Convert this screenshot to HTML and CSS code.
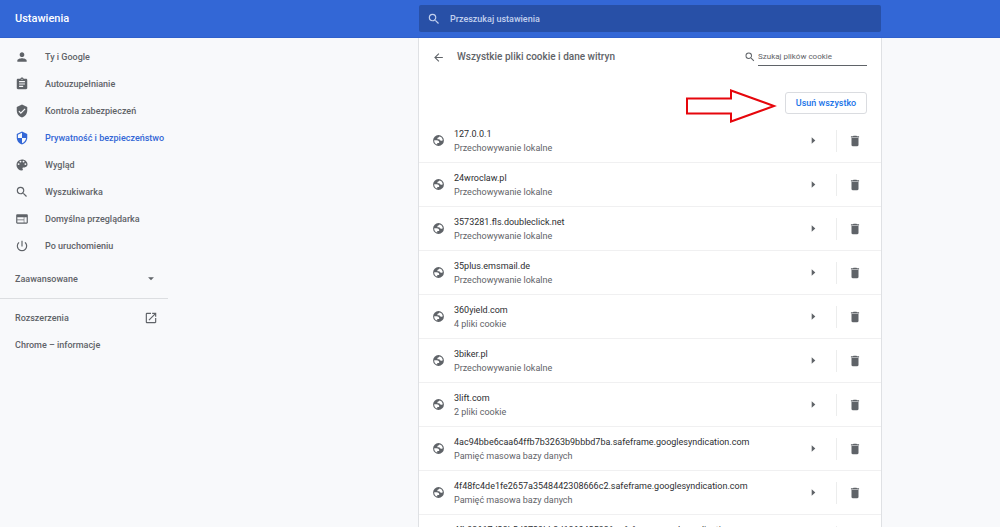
FILE: index.html
```html
<!DOCTYPE html>
<html lang="pl">
<head>
<meta charset="utf-8">
<meta name="viewport" content="width=device-width, initial-scale=1">
<title>Ustawienia</title>
<link rel="stylesheet" href="styles.css">
</head>
<body>
<svg class="sprite" aria-hidden="true">
  <symbol id="globe" viewBox="0 0 24 24"><path fill-rule="evenodd" d="M12 2a10 10 0 1 0 0 20 10 10 0 0 0 0-20zM4.100 11.500h4.500c3.300 0 5 1.700 4.700 5h-3.600v3.100a8 8 0 0 1-5.600-8.100zM14.600 4.400a8 8 0 0 1 5.300 6.600c-.6 1-1.500 1.600-2.800 1.600-2.100 0-3.200-.9-3.200-2.700H10c-.3-2.500.7-3.800 2.800-3.800 0-.8.600-1.500 1.800-1.700z"/></symbol>
  <symbol id="trash" viewBox="0 0 24 24"><path d="M6 19c0 1.100.9 2 2 2h8c1.100 0 2-.9 2-2V7H6v12zM19 4h-3.500l-1-1h-5l-1 1H5v2h14V4z"/></symbol>
  <symbol id="search" viewBox="0 0 24 24"><path d="M15.500 14h-.79l-.28-.27A6.471 6.471 0 0 0 16 9.500 6.500 6.500 0 1 0 9.500 16c1.610 0 3.090-.59 4.230-1.570l.27.28v.79l5 4.990L20.490 19l-4.990-5zm-6 0C7.010 14 5 11.990 5 9.500S7.010 5 9.500 5 14 7.010 14 9.500 11.990 14 9.500 14z"/></symbol>
  <symbol id="right" viewBox="0 0 24 24"><path d="M8 5v14l8-7z"/></symbol>
</svg>
<header class="topbar">
  <h1 class="topbar-title">Ustawienia</h1>
  <label class="topbar-search">
    <svg class="icon-search"><use href="#search"/></svg>
    <input class="topbar-input" type="search" placeholder="Przeszukaj ustawienia" aria-label="Przeszukaj ustawienia">
  </label>
</header>
<div class="layout">
  <nav class="menu">
    <a class="menu-item" href="#people"><svg class="menu-icon" viewBox="0 0 24 24"><path d="M12 12c2.210 0 4-1.790 4-4s-1.790-4-4-4-4 1.790-4 4 1.790 4 4 4zm0 2c-2.670 0-8 1.340-8 4v2h16v-2c0-2.660-5.330-4-8-4z"/></svg>Ty i Google</a>
    <a class="menu-item" href="#autofill"><svg class="menu-icon" viewBox="0 0 24 24"><path d="M19 3h-4.180C14.400 1.840 13.300 1 12 1s-2.400.84-2.820 2H5c-1.100 0-2 .9-2 2v14c0 1.100.9 2 2 2h14c1.100 0 2-.9 2-2V5c0-1.100-.9-2-2-2zm-7 0c.55 0 1 .45 1 1s-.45 1-1 1-1-.45-1-1 .45-1 1-1zm2 14H7v-2h7v2zm3-4H7v-2h10v2zm0-4H7V7h10v2z"/></svg>Autouzupełnianie</a>
    <a class="menu-item" href="#safety"><svg class="menu-icon" viewBox="0 0 24 24"><path d="M12 1 3 5v6c0 5.550 3.840 10.740 9 12 5.160-1.260 9-6.450 9-12V5l-9-4zm-2 16-4-4 1.410-1.410L10 14.170l6.590-6.590L18 9l-8 8z"/></svg>Kontrola zabezpieczeń</a>
    <a class="menu-item menu-item-active" href="#privacy" aria-current="page"><svg class="menu-icon" viewBox="0 0 24 24"><path d="M12 1 3 5v6c0 5.550 3.840 10.740 9 12 5.160-1.260 9-6.450 9-12V5l-9-4zm0 10.990h7c-.53 4.120-3.280 7.790-7 8.940V12H5V6.300l7-3.110v8.800z"/></svg>Prywatność i bezpieczeństwo</a>
    <a class="menu-item" href="#appearance"><svg class="menu-icon" viewBox="0 0 24 24"><path d="M12 2.500a9.500 9.500 0 0 0 0 19c.9 0 1.600-.7 1.600-1.600 0-.4-.2-.8-.4-1.100-.3-.3-.4-.6-.4-1 0-.9.7-1.600 1.600-1.600h1.800c2.900 0 5.300-2.400 5.300-5.300 0-4.700-4.300-8.400-9.500-8.400zM6.200 12a1.600 1.600 0 1 1 0-3.200 1.600 1.600 0 0 1 0 3.200zm3.200-4.200a1.600 1.600 0 1 1 0-3.200 1.600 1.600 0 0 1 0 3.200zm5.200 0a1.600 1.600 0 1 1 0-3.200 1.600 1.600 0 0 1 0 3.200zm3.200 4.200a1.600 1.600 0 1 1 0-3.200 1.600 1.600 0 0 1 0 3.200z"/></svg>Wygląd</a>
    <a class="menu-item" href="#search-engine"><svg class="menu-icon"><use href="#search"/></svg>Wyszukiwarka</a>
    <a class="menu-item" href="#browser"><svg class="menu-icon" viewBox="0 0 24 24"><path d="M20 4H4c-1.100 0-1.990.9-1.990 2L2 18c0 1.100.9 2 2 2h16c1.100 0 2-.9 2-2V6c0-1.100-.9-2-2-2zm-5 14H4v-4h11v4zm0-5H4V9h11v4zm5 5h-4V9h4v9z"/></svg>Domyślna przeglądarka</a>
    <a class="menu-item" href="#startup"><svg class="menu-icon" viewBox="0 0 24 24"><path d="M13 3h-2v10h2V3zm4.830 2.170-1.420 1.420A6.920 6.920 0 0 1 19 12a7 7 0 1 1-11.420-5.420L6.170 5.170A8.932 8.932 0 0 0 3 12a9 9 0 1 0 18 0c0-2.740-1.230-5.180-3.170-6.830z"/></svg>Po uruchomieniu</a>
    <button class="menu-advanced" type="button">Zaawansowane<svg class="menu-icon" viewBox="0 0 24 24"><path d="m7 9 5 5 5-5z"/></svg></button>
    <div class="menu-links">
      <a class="menu-link" href="#extensions">Rozszerzenia<svg class="menu-icon" viewBox="0 0 24 24"><path d="M19 19H5V5h7V3H5a2 2 0 0 0-2 2v14a2 2 0 0 0 2 2h14c1.100 0 2-.9 2-2v-7h-2v7zM14 3v2h3.590l-9.830 9.830 1.410 1.410L19 6.410V10h2V3h-7z"/></svg></a>
      <a class="menu-link" href="#about">Chrome – informacje</a>
    </div>
  </nav>
  <main class="panel">
    <div class="panel-head">
      <button class="back" type="button" aria-label="Wstecz"><svg class="icon-back" viewBox="0 0 24 24"><path d="M20 11H7.830l5.590-5.590L12 4l-8 8 8 8 1.410-1.410L7.830 13H20v-2z"/></svg></button>
      <h2 class="panel-title">Wszystkie pliki cookie i dane witryn</h2>
      <label class="filter"><svg class="icon-filter"><use href="#search"/></svg><input class="filter-input" type="search" placeholder="Szukaj plików cookie" aria-label="Szukaj plików cookie"></label>
    </div>
    <div class="actions">
      <svg class="pointer" viewBox="0 0 92 40" aria-hidden="true"><path d="M2 15.500h44V7.500l43 15.500-43 15.500v-8H2z"/></svg>
      <button class="remove-all" type="button">Usuń wszystko</button>
    </div>
    <ul class="sites">
      <li class="site"><svg class="site-icon"><use href="#globe"/></svg><div class="site-text"><div class="site-name">127.0.0.1</div><div class="site-info">Przechowywanie lokalne</div></div><button class="open" type="button" aria-label="Szczegóły"><svg class="icon-open"><use href="#right"/></svg></button><button class="delete" type="button" aria-label="Usuń"><svg class="icon-delete"><use href="#trash"/></svg></button></li>
      <li class="site"><svg class="site-icon"><use href="#globe"/></svg><div class="site-text"><div class="site-name">24wroclaw.pl</div><div class="site-info">Przechowywanie lokalne</div></div><button class="open" type="button" aria-label="Szczegóły"><svg class="icon-open"><use href="#right"/></svg></button><button class="delete" type="button" aria-label="Usuń"><svg class="icon-delete"><use href="#trash"/></svg></button></li>
      <li class="site"><svg class="site-icon"><use href="#globe"/></svg><div class="site-text"><div class="site-name">3573281.fls.doubleclick.net</div><div class="site-info">Przechowywanie lokalne</div></div><button class="open" type="button" aria-label="Szczegóły"><svg class="icon-open"><use href="#right"/></svg></button><button class="delete" type="button" aria-label="Usuń"><svg class="icon-delete"><use href="#trash"/></svg></button></li>
      <li class="site"><svg class="site-icon"><use href="#globe"/></svg><div class="site-text"><div class="site-name">35plus.emsmail.de</div><div class="site-info">Przechowywanie lokalne</div></div><button class="open" type="button" aria-label="Szczegóły"><svg class="icon-open"><use href="#right"/></svg></button><button class="delete" type="button" aria-label="Usuń"><svg class="icon-delete"><use href="#trash"/></svg></button></li>
      <li class="site"><svg class="site-icon"><use href="#globe"/></svg><div class="site-text"><div class="site-name">360yield.com</div><div class="site-info">4 pliki cookie</div></div><button class="open" type="button" aria-label="Szczegóły"><svg class="icon-open"><use href="#right"/></svg></button><button class="delete" type="button" aria-label="Usuń"><svg class="icon-delete"><use href="#trash"/></svg></button></li>
      <li class="site"><svg class="site-icon"><use href="#globe"/></svg><div class="site-text"><div class="site-name">3biker.pl</div><div class="site-info">Przechowywanie lokalne</div></div><button class="open" type="button" aria-label="Szczegóły"><svg class="icon-open"><use href="#right"/></svg></button><button class="delete" type="button" aria-label="Usuń"><svg class="icon-delete"><use href="#trash"/></svg></button></li>
      <li class="site"><svg class="site-icon"><use href="#globe"/></svg><div class="site-text"><div class="site-name">3lift.com</div><div class="site-info">2 pliki cookie</div></div><button class="open" type="button" aria-label="Szczegóły"><svg class="icon-open"><use href="#right"/></svg></button><button class="delete" type="button" aria-label="Usuń"><svg class="icon-delete"><use href="#trash"/></svg></button></li>
      <li class="site"><svg class="site-icon"><use href="#globe"/></svg><div class="site-text"><div class="site-name">4ac94bbe6caa64ffb7b3263b9bbbd7ba.safeframe.googlesyndication.com</div><div class="site-info">Pamięć masowa bazy danych</div></div><button class="open" type="button" aria-label="Szczegóły"><svg class="icon-open"><use href="#right"/></svg></button><button class="delete" type="button" aria-label="Usuń"><svg class="icon-delete"><use href="#trash"/></svg></button></li>
      <li class="site"><svg class="site-icon"><use href="#globe"/></svg><div class="site-text"><div class="site-name">4f48fc4de1fe2657a3548442308666c2.safeframe.googlesyndication.com</div><div class="site-info">Pamięć masowa bazy danych</div></div><button class="open" type="button" aria-label="Szczegóły"><svg class="icon-open"><use href="#right"/></svg></button><button class="delete" type="button" aria-label="Usuń"><svg class="icon-delete"><use href="#trash"/></svg></button></li>
      <li class="site"><svg class="site-icon"><use href="#globe"/></svg><div class="site-text"><div class="site-name">4fb93617d23b5d0729bb3d186042593f.safeframe.googlesyndication.com</div><div class="site-info">Pamięć masowa bazy danych</div></div><button class="open" type="button" aria-label="Szczegóły"><svg class="icon-open"><use href="#right"/></svg></button><button class="delete" type="button" aria-label="Usuń"><svg class="icon-delete"><use href="#trash"/></svg></button></li>
    </ul>
  </main>
</div>
</body>
</html>
```
FILE: styles.css
```css
* { box-sizing: border-box; }
body {
  margin: 0;
  height: 100vh;
  display: flex;
  flex-direction: column;
  overflow: hidden;
  background: #f8f9fb;
  color: #5f6368;
  font: 9px/14px Roboto, sans-serif;
}
h1, h2, ul { margin: 0; padding: 0; }
button, input { font: inherit; color: inherit; background: none; border: 0; padding: 0; margin: 0; }
button { cursor: pointer; }
input { outline: 0; appearance: none; }
a { color: inherit; text-decoration: none; }
svg { display: block; flex: none; fill: currentColor; }
.sprite { position: absolute; width: 0; height: 0; }

.topbar, .layout {
  display: grid;
  grid-template-columns: minmax(168px, 1fr) minmax(300px, 462px) minmax(16px, 119px);
}
.topbar {
  flex: none;
  height: 38px;
  align-items: center;
  background: #3367d6;
  color: #fff;
  border-bottom: 1px solid #2f60cc;
}
.topbar-title { padding-left: 15px; font-size: 11px; font-weight: 500; }
.topbar-search {
  display: flex;
  align-items: center;
  gap: 9px;
  height: 27px;
  padding: 0 8px;
  border-radius: 2px;
  background: #2850a7;
  color: #c2d0ee;
}
.icon-search { width: 14px; height: 14px; }
.topbar-input { flex: 1; min-width: 0; font-weight: 500; }
input::placeholder { color: inherit; opacity: 1; }

.layout { flex: 1; min-height: 0; }
.menu { width: 168px; padding-top: 5px; font-weight: 500; }
.menu-item {
  display: flex;
  align-items: center;
  gap: 16px;
  height: 27px;
  padding-left: 15px;
}
.menu-item-active { color: #3367d6; }
.menu-icon { width: 14px; height: 14px; }
.menu-advanced, .menu-link {
  display: flex;
  align-items: center;
  justify-content: space-between;
  width: 100%;
  height: 27px;
  padding: 0 10px 0 15px;
}
.menu-advanced { height: 39px; }
.menu-links { border-top: 1px solid #dcdee1; padding-top: 5px; }

.panel {
  min-height: 0;
  overflow: hidden;
  background: #fff;
  box-shadow: 0 0 0 1px #dfe1e4;
  clip-path: inset(0 -2px);
}
.panel-head { display: flex; align-items: center; height: 38px; padding: 0 14px 0 13px; }
.icon-back { width: 13px; height: 13px; }
.panel-title { flex: 1; padding-left: 12px; font-size: 10px; font-weight: 500; }
.filter { display: flex; align-items: center; gap: 2px; font-size: 8px; }
.icon-filter { width: 12px; height: 12px; }
.filter-input { width: 109px; height: 17px; border-bottom: 1px solid #5f6368; }
.actions {
  display: flex;
  align-items: center;
  justify-content: flex-end;
  gap: 8px;
  height: 43px;
  padding: 10px 14px 0;
}
.pointer { width: 92px; height: 40px; fill: none; stroke: #e6060c; stroke-width: 2; }
.remove-all {
  height: 22px;
  width: 82px;
  border: 1px solid #dadce0;
  border-radius: 3px;
  color: #1a73e8;
  font-weight: 500;
}
.sites { list-style: none; }
.site {
  display: flex;
  align-items: center;
  height: 44px;
  padding-left: 13px;
  border-bottom: 1px solid #f0f0f1;
}
.site-icon { width: 13px; height: 13px; }
.site-text { flex: 1; min-width: 0; padding-left: 9px; }
.site-name { color: #2d2e31; }
.open { width: 46px; height: 22px; display: grid; place-items: center; }
.icon-open { width: 11px; height: 11px; }
.delete {
  width: 45px;
  height: 22px;
  padding-right: 8px;
  border-left: 1px solid #eceded;
  display: grid;
  place-items: center;
}
.icon-delete { width: 14px; height: 14px; }
```
